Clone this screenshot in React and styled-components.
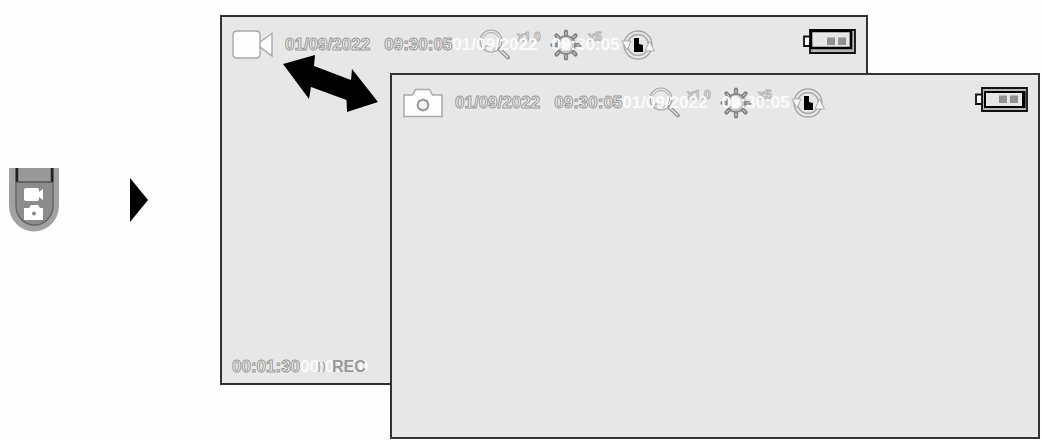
import React from "react";
import styled, { createGlobalStyle } from 'styled-components';

const GlobalStyle = createGlobalStyle`
  body {
    margin: 0;
    background: #fefefe;
    font-family: "Liberation Sans", Arial, sans-serif;
  }

  svg {
    display: block;
    flex: none;
  }
`;

const Page = styled.main`
  box-sizing: border-box;
  min-height: 100vh;
  padding: 15px 2px 1px 9px;
  display: flex;
  align-items: stretch;
`;

const Steps = styled.aside`
  flex: none;
  width: 211px;
  display: flex;
  align-items: center;
  gap: 70px;
  padding-bottom: 55px;
  box-sizing: border-box;
`;

const Stage = styled.section`
  position: relative;
  flex: 1;
  display: grid;
  grid-template-columns: 170px 1fr 172px;
  grid-template-rows: 58px 1fr 54px;
`;

const Screen = styled.article`
  box-sizing: border-box;
  display: flex;
  flex-direction: column;
  justify-content: space-between;
  padding: 12px 10px 6px;
  background: #e7e7e7;
  border: 2px solid #333;
  grid-column: ${({ $front }) => ($front ? '2 / 4' : '1 / 3')};
  grid-row: ${({ $front }) => ($front ? '2 / 4' : '1 / 3')};
`;

const Bar = styled.header`
  display: flex;
  align-items: center;
`;

const Footer = styled.footer`
  display: flex;
  align-items: center;
`;

const Outlined = styled.span`
  font-size: 17px;
  line-height: 20px;
  font-weight: bold;
  white-space: pre;
  color: #f4f4f4;
  -webkit-text-stroke: 1px #999;
`;

const Stamp = styled(Outlined)`
  margin-left: 12px;
`;

const Light = styled.span`
  font-size: 17px;
  line-height: 20px;
  font-weight: bold;
  white-space: pre;
  color: #fafafa;
`;

// the light text and the icons share one cell
const Overlap = styled.div`
  display: grid;
  align-items: center;
  margin-right: auto;

  > * {
    grid-area: 1 / 1;
  }
`;

const Icons = styled.div`
  display: flex;
  align-items: center;
  gap: 6px;
  padding-left: 27px;
`;

const Small = styled.span`
  width: 27px;
  align-self: flex-start;
  font-size: 12px;
  line-height: 16px;
  font-weight: bold;
  color: #eee;
  -webkit-text-stroke: 1px #b4b4b4;
`;

const Rec = styled.span`
  display: flex;
  align-items: center;
  gap: 6px;
  padding-left: 16px;
  font-size: 16px;
  line-height: 20px;
  font-weight: bold;
  color: #999;
`;

const BatteryShape = styled.svg`
  align-self: flex-start;
`;

const Swap = styled.svg`
  position: absolute;
  left: 61px;
  top: 37px;
`;

const VideoIcon = () => (
  <svg width="41" height="30" viewBox="0 0 41 30" fill="#fdfdfd" stroke="#aaa" strokeWidth="1.4">
    <path d="M5 1h19q4 0 4 4v7L40 3.500v22.500L28 17v7q0 4-4 4H5q-4 0-4-4V5q0-4 4-4z" />
    <path d="M28 11v7" />
  </svg>
);

const CameraIcon = () => (
  <svg width="41" height="30" viewBox="0 0 41 30" fill="#fdfdfd" stroke="#aaa" strokeWidth="1.500">
    <path d="M2 7h8.500l3-5.500h14L30.500 7H40v21.500H2z" />
    <path d="M21 11.500l4 1.500 1.500 4-1.500 4-4 1.500-4-1.500-1.500-4 1.500-4z" stroke="#999" strokeWidth="2" fill="#f3f3f3" />
  </svg>
);

const ZoomIcon = () => (
  <svg width="32" height="32" viewBox="0 0 32 32" fill="none">
    <circle cx="12" cy="12" r="11" stroke="#aaa" strokeWidth="1.200" />
    <circle cx="12" cy="12" r="8.500" stroke="#aaa" strokeWidth="1" />
    <path d="M20 20L29 28.500" stroke="#999" strokeWidth="4" strokeLinecap="round" />
    <path d="M20.500 20.500L28.500 28" stroke="#e0e0e0" strokeWidth="1.500" strokeLinecap="round" />
    <path d="M5 20v-5l2 3 2-3v5M12 19h5" stroke="#bbb" />
  </svg>
);

const rays = [0, 45, 90, 135, 180, 225, 270, 315];

const SunIcon = () => (
  <svg width="32" height="32" viewBox="0 0 32 32" fill="none">
    <g strokeLinecap="round">
      {rays.map((r) => (
        <path key={r} d="M16 6V2.500" stroke="#808080" strokeWidth="4.200" transform={`rotate(${r} 16 16)`} />
      ))}
      {rays.map((r) => (
        <path key={r} d="M16 5.500V3" stroke="#ccc" strokeWidth="1.200" transform={`rotate(${r} 16 16)`} />
      ))}
    </g>
    <circle cx="16" cy="16" r="9" stroke="#888" strokeWidth="2" />
    <circle cx="16" cy="16" r="7" stroke="#aaa" strokeWidth="1" />
    <path d="M12 9l9 7-9 6z" fill="#fafafa" />
  </svg>
);

const ClockIcon = () => (
  <svg width="34" height="32" viewBox="0 0 34 32" fill="none">
    <circle cx="17" cy="16" r="14" stroke="#a8a8a8" strokeWidth="1.400" />
    <circle cx="17" cy="16" r="10.500" stroke="#a8a8a8" strokeWidth="1.400" />
    <circle cx="17" cy="16" r="12.300" stroke="#e4e4e4" strokeWidth="1.500" />
    <path d="M1 12h9l-4 9zM33.500 22H24l4.500-10z" fill="#f8f8f8" stroke="#aaa" />
    <path d="M13 9h5v6l4 1v7h-9z" fill="#000" />
  </svg>
);

const Battery = ({ inset }) => (
  <BatteryShape width="53" height="25" viewBox="0 0 53 25">
    <path d="M7 1h45v23H7z" fill="#b8b8b8" stroke="#111" strokeWidth="1.800" />
    <path d="M1 7.500h6v9.500H1z" fill="#fff" stroke="#111" strokeWidth="1.800" />
    {inset
      ? <path d="M10 5h38v15H10z" fill="#e6e6e6" stroke="#000" strokeWidth="2" />
      : <path d="M8 2h40v17H8z" fill="#e6e6e6" stroke="#000" strokeWidth="2.600" />}
    {inset && <path d="M49 4v17" stroke="#000" strokeWidth="3" />}
    <path d="M24 8.500h8v7.500h-8zM35 8.500h8v7.500h-8z" fill="#909090" />
  </BatteryShape>
);

const Remote = () => (
  <svg width="50" height="64" viewBox="0 0 50 64">
    <path d="M0 0h50v38a25 25.500 0 0 1-50 0z" fill="#a2a2a2" />
    <path d="M7 0h37v38a18.500 19 0 0 1-37 0z" fill="#8c8c8c" stroke="#666" strokeWidth="1.500" />
    <path d="M8 0h35v14H8z" fill="#999" />
    <path d="M8 0v14M43 0v14" stroke="#222" strokeWidth="2.500" />
    <path d="M8 14h35" stroke="#555" strokeWidth="1.500" />
    <path d="M17 20h11q2 0 2 2v2l4-3v11l-4-3v2q0 2-2 2H17q-2 0-2-2v-9q0-2 2-2z" fill="#fff" />
    <path d="M15 40h5l2-3h7l2 3h3v12H15z" fill="#fff" />
    <circle cx="25" cy="45.500" r="2" fill="#888" />
  </svg>
);

const Header = ({ icon, inset }) => (
  <Bar>
    {icon}
    <Stamp>01/09/2022   09:30:05</Stamp>
    <Overlap>
      <Icons>
        <ZoomIcon />
        <Small>x1.0</Small>
        <SunIcon />
        <Small>x5</Small>
        <ClockIcon />
      </Icons>
      <Light>01/09/2022   09:30:05</Light>
    </Overlap>
    <Battery inset={inset} />
  </Bar>
);

const App = () => {
  return (
    <>
      <GlobalStyle />
      <Page>
        <Steps>
          <Remote />
          <svg width="20" height="44" viewBox="0 0 20 44">
            <path d="M1 0L19 22L1 44z" fill="#000" />
          </svg>
        </Steps>
        <Stage>
          <Screen>
            <Header icon={<VideoIcon />} />
            <Footer>
              <Outlined>00:01:30</Outlined>
              <Overlap>
                <Light>00:01:30</Light>
                <Rec>
                  <svg width="10" height="12" viewBox="0 0 10 12" fill="none" stroke="#aaa">
                    <path d="M3 1v10M7 1q3 5 0 10" strokeWidth="1.500" />
                  </svg>
                  REC
                </Rec>
              </Overlap>
            </Footer>
          </Screen>
          <Screen $front>
            <Header icon={<CameraIcon />} inset />
          </Screen>
          <Swap width="100" height="62" viewBox="281 52 100 62">
            <path d="M283 64L315 55L314 66L351 80L352 69L378 102L347 112L346.500 100L311 87L309 99z" />
          </Swap>
        </Stage>
      </Page>
    </>
  );
};

export default App;
